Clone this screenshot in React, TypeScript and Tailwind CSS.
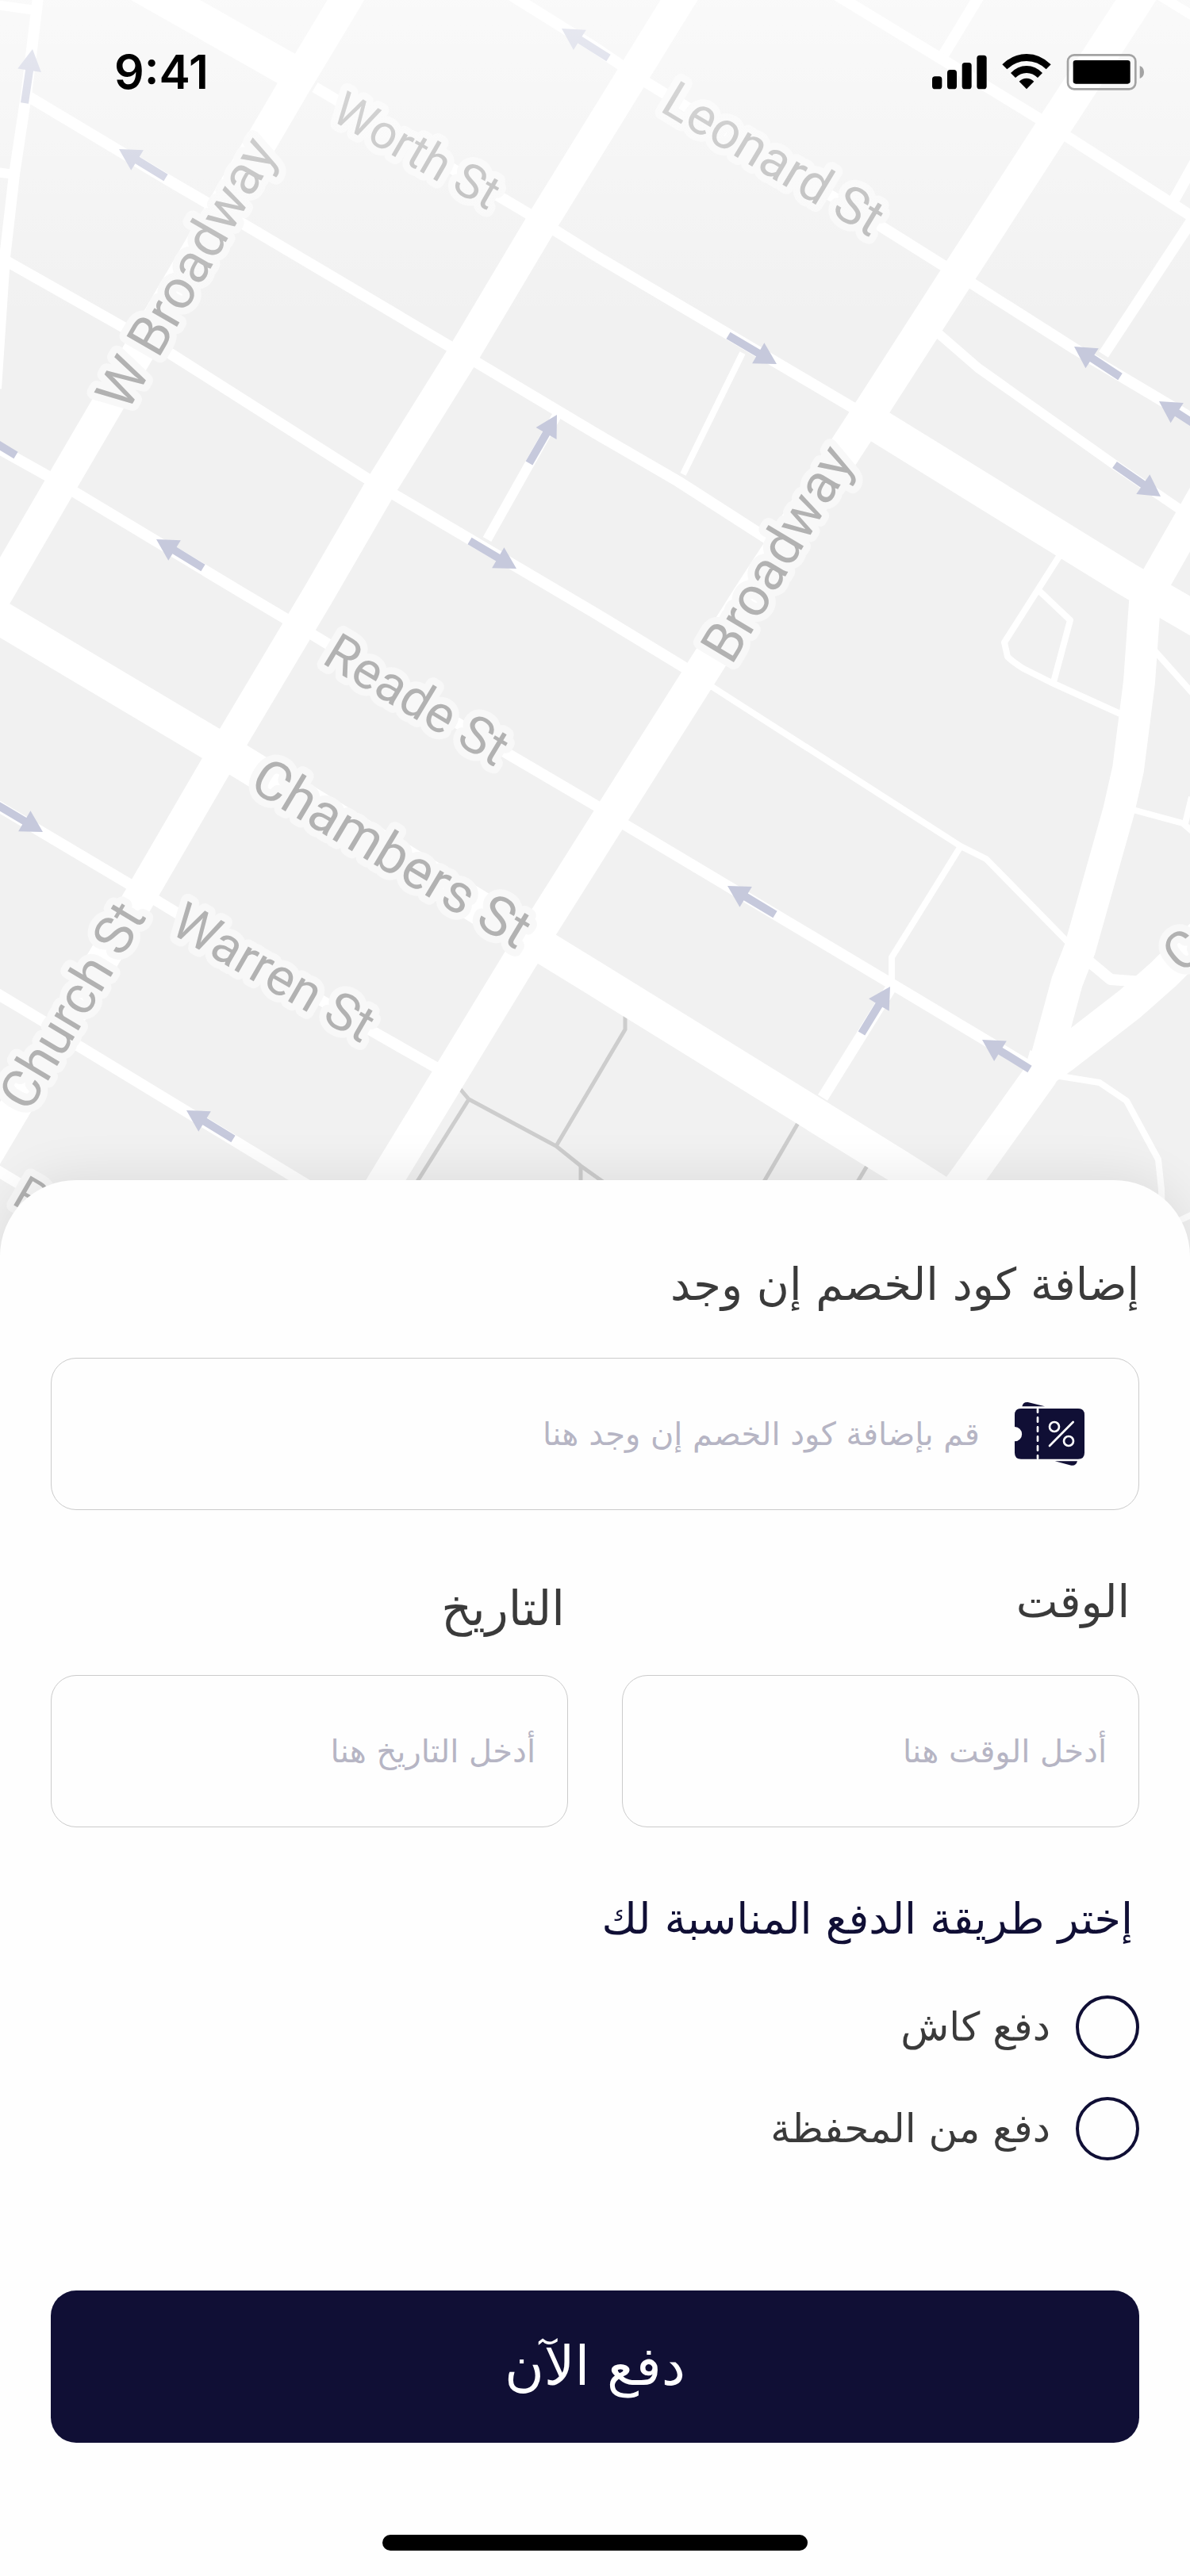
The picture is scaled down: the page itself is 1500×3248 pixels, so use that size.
import { useState } from 'react';

type Point = [number, number];

const ROADS: { width: number; lines: string[] }[] = [
  {
    width: 43,
    lines: [
      'M138 -40L362 87',
      'M-40 755L0 779L282 947L750 1234L1133 1471L1260 1552',
      'M1109 538L1420 730L1520 788',
      'M1466 -55L1432 0L1326 163L1209 344L1092 526L946 750L881 853L771 1027L655 1211L487 1487L440 1565',
      'M1319 1330L1312 1355L1221 1482L1170 1552',
      'M1319 1346L1340 1331L1424 1266L1467 1228L1520 1175',
    ],
  },
  {
    width: 40,
    lines: [
      'M465 -50L436 0L371 108L80 605L-30 794',
      'M885 -45L856 0L682 282L585 445L481 612L401 750L271 968L175 1133L14 1405L-40 1496',
      'M1520 620L1459 727L1443 760L1436 860L1422 970L1410 1023L1361 1197L1345 1238L1319 1334',
    ],
  },
  {
    width: 14,
    lines: [
      'M397 110L667 270L750 322L1080 517',
      'M50 -20L33 120L18 220L6 325L-5 490',
      'M33 120L210 226L306 282L564 435L750 546L855 607L970 681',
      'M6 328L158 414L215 446L462 603L750 773L870 846',
      'M-10 561L60 600L306 748L392 799L641 951L750 1015L788 1040L1123 1240L1300 1346',
      'M-10 1012L160 1113L469 1300L555 1349',
      'M-10 1249L55 1288L96 1317L420 1514',
      'M-10 1472L60 1514',
      'M630 -15L750 60L815 104L1113 287L1223 356L1355 440L1520 538',
      'M1040 -15L1183 72L1312 151L1487 263L1520 284',
      'M1241 -16L1190 68',
      'M1520 180L1480 252',
      'M1510 266L1391 447',
      'M1037 1384L1124 1244',
      'M1370 1210L1400 1235L1440 1238',
    ],
  },
  {
    width: 12,
    lines: [
      'M-5 6L45 13',
      'M-5 217L18 220',
      'M1180 418L1233 464L1405 586L1490 644',
      'M1445 -16L1510 24',
      'M704 520L614 680',
    ],
  },
  {
    width: 8,
    lines: [
      'M936 445L861 598',
      'M890 861L1211 1067L1243 1083L1345 1187',
      'M1211 1067L1124 1207L1124 1240',
      'M1336 700L1266 810L1270 828Q1276 834 1290 843L1324 860L1412 900',
      'M1310 745L1349 782L1328 860',
      'M1455 820L1505 876',
      'M1428 1021L1491 1038L1505 1050M1494 1038L1502 1005',
      'M1330 1356L1386 1365L1420 1388L1460 1462L1464 1500L1466 1570',
      'M1480 1542L1510 1528',
    ],
  },
];

const PATHS = [
  'M580 1373L591 1386L701 1445L732 1470L760 1490',
  'M591 1386L522 1496',
  'M701 1445L788 1298V1281',
  'M732 1470V1496',
  'M1006 1416L960 1495',
  'M1093 1470L1078 1495',
];

const ARROWS: { from: Point; to: Point }[] = [
  { from: [31, 130], to: [41, 62] },
  { from: [209, 224], to: [150, 188] },
  { from: [767, 73], to: [708, 36] },
  { from: [20, 574], to: [-38, 539] },
  { from: [256, 716], to: [197, 680] },
  { from: [667, 584], to: [702, 523] },
  { from: [592, 682], to: [651, 717] },
  { from: [918, 423], to: [979, 459] },
  { from: [1412, 475], to: [1354, 437] },
  { from: [1520, 544], to: [1461, 506] },
  { from: [1405, 586], to: [1463, 626] },
  { from: [-5, 1014], to: [54, 1049] },
  { from: [294, 1436], to: [235, 1400] },
  { from: [977, 1153], to: [917, 1117] },
  { from: [1086, 1303], to: [1122, 1244] },
  { from: [1298, 1348], to: [1238, 1311] },
];

const STREETS: { name: string; at: Point; angle: number; size: number }[] = [
  { name: 'Worth St', at: [415, 150], angle: 30, size: 60 },
  { name: 'Leonard St', at: [830, 139], angle: 31, size: 65 },
  { name: 'W Broadway', at: [160, 521], angle: -60, size: 69 },
  { name: 'Broadway', at: [922, 840], angle: -59, size: 69 },
  { name: 'Reade St', at: [404, 835], angle: 31, size: 65 },
  { name: 'Chambers St', at: [312, 994], angle: 31, size: 69 },
  { name: 'Warren St', at: [212, 1175], angle: 30, size: 65 },
  { name: 'Church St', at: [36, 1404], angle: -59, size: 67 },
  { name: 'C', at: [1489, 1229], angle: -40, size: 65 },
  { name: 'P', at: [13, 1517], angle: 30, size: 60 },
];

function Arrow({ from, to }: { from: Point; to: Point }) {
  const dx = to[0] - from[0];
  const dy = to[1] - from[1];
  const length = Math.hypot(dx, dy);
  const angle = (Math.atan2(dy, dx) * 180) / Math.PI;
  return (
    <path
      transform={`translate(${from[0]} ${from[1]}) rotate(${angle})`}
      d={`M0 -5H${length - 27}V-15L${length} 0L${length - 27} 15V5H0Z`}
    />
  );
}

function StreetMap() {
  return (
    <svg viewBox="0 0 1500 1584" direction="ltr" className="block w-full" role="img" aria-label="خريطة">
      <defs>
        <linearGradient id="fade" x1="0" y1="0" x2="0" y2="1">
          <stop offset="0" stopColor="#fff" stopOpacity="0.62" />
          <stop offset="1" stopColor="#fff" stopOpacity="0" />
        </linearGradient>
      </defs>
      <rect width="1500" height="1584" fill="#f1f1f1" />
      <g fill="none" stroke="#cdcdcd" strokeWidth="5">
        {PATHS.map((d) => (
          <path key={d} d={d} />
        ))}
      </g>
      <g fill="none" stroke="#fff" strokeLinejoin="round">
        {ROADS.map((road) => (
          <path key={road.width} d={road.lines.join('')} strokeWidth={road.width} />
        ))}
      </g>
      <g fill="#c6c9dc">
        {ARROWS.map((arrow) => (
          <Arrow key={arrow.from.join()} {...arrow} />
        ))}
      </g>
      <g
        fill="#b2b2b2"
        stroke="#f8f8f8"
        strokeWidth="18"
        strokeLinejoin="round"
        paintOrder="stroke"
        fontFamily="Roboto, sans-serif"
        direction="ltr"
      >
        {STREETS.map(({ name, at, angle, size }) => (
          <text key={name} fontSize={size} transform={`translate(${at[0]} ${at[1]}) rotate(${angle})`}>
            {name}
          </text>
        ))}
      </g>
      <rect width="1500" height="410" fill="url(#fade)" />
    </svg>
  );
}

function StatusIcons() {
  return (
    <svg viewBox="73 57 801 138" className="h-[46px] w-[267px]" aria-hidden="true">
      <rect x="73" y="142" width="37" height="48" rx="11" />
      <rect x="130" y="117" width="36" height="73" rx="11" />
      <rect x="186" y="90" width="36" height="100" rx="11" />
      <rect x="242" y="62" width="37" height="128" rx="11" />
      <path d="M338 97Q378 57 430 57T522 97L504 115Q472 84 430 84T356 115Z" />
      <path d="M370 129Q396 102 430 102T490 129L472 147Q454 129 430 129T388 147Z" />
      <path d="M402 161Q414 149 430 149T458 161L430 190Z" />
      <rect x="586" y="61" width="256" height="129" rx="24" fill="none" stroke="#a3a3a3" strokeWidth="8" />
      <rect x="606" y="81" width="216" height="89" rx="10" />
      <path d="M858 102Q874 108 874 126T858 150Z" fill="#a3a3a3" />
    </svg>
  );
}

function TicketIcon() {
  return (
    <svg viewBox="120 82 264 244" className="h-[82px] w-[88px] shrink-0" aria-hidden="true">
      <g fill="#100f35">
        <path d="M148 100Q152 82 170 84L234 100Z" />
        <path d="M272 307H357Q352 326 334 323Z" />
        <path d="M144 108H360Q384 108 384 132V275Q384 299 360 299H144Q120 299 120 275V232A27 27 0 0 0 120 177V132Q120 108 144 108Z" />
      </g>
      <g fill="none" stroke="#fff" strokeWidth="8" strokeLinecap="round">
        <path d="M207 110V122M207 142V158M207 178V194M207 214V230M207 250V266M207 286V297" />
        <circle cx="270" cy="177" r="18" />
        <circle cx="324" cy="231" r="18" />
        <path d="M341 159L252 249" />
      </g>
    </svg>
  );
}

const FIELD =
  'h-48 w-full rounded-4xl border border-[#cbcbcb] bg-transparent px-10 text-[40px] leading-[80px] text-[#3a3a3a] outline-none placeholder:overflow-visible placeholder:leading-[80px] placeholder:text-[#b6b5c4] placeholder:opacity-100';

export default function App() {
  const [method, setMethod] = useState('');

  return (
    <main
      dir="rtl"
      className="relative w-full overflow-hidden bg-[#fefefe] font-['DejaVu_Sans',sans-serif]"
    >
      <StreetMap />

      <header
        dir="ltr"
        className="absolute inset-x-0 top-0 flex items-center justify-between pt-[60px] pr-[58px] pl-36"
      >
        <time className="font-[Inter,sans-serif] text-[59px] leading-[62px] font-semibold">9:41</time>
        <StatusIcons />
      </header>

      <form
        className="relative -mt-24 rounded-t-[96px] bg-[#fefefe] px-16 pt-23 pb-8 shadow-[0_-4px_64px_rgba(0,0,0,0.09)]"
        onSubmit={(event) => event.preventDefault()}
      >
        <label htmlFor="coupon" className="block text-[56px] leading-[80px] text-[#3a3a3a]">
          إضافة كود الخصم إن وجد
        </label>
        <div className="mt-13 flex h-48 items-center gap-11 rounded-4xl border border-[#cbcbcb] px-[68px]">
          <TicketIcon />
          <input
            id="coupon"
            type="text"
            placeholder="قم بإضافة كود الخصم إن وجد هنا"
            className="h-full min-w-0 flex-1 bg-transparent text-[40px] leading-[80px] text-[#3a3a3a] outline-none placeholder:overflow-visible placeholder:leading-[80px] placeholder:text-[#b6b5c4] placeholder:opacity-100"
          />
        </div>

        <div className="mt-19 grid grid-cols-2 gap-17">
          <div>
            <label htmlFor="time" className="mb-13 block pr-3 text-[56px] leading-[80px] text-[#3a3a3a]">
              الوقت
            </label>
            <input id="time" type="text" placeholder="أدخل الوقت هنا" className={FIELD} />
          </div>
          <div>
            <label htmlFor="date" className="mb-9 block pr-1 text-[60px] leading-[96px] text-[#3a3a3a]">
              التاريخ
            </label>
            <input id="date" type="text" placeholder="أدخل التاريخ هنا" className={FIELD} />
          </div>
        </div>

        <fieldset className="mt-19">
          <legend className="pr-2 text-[54px] leading-[80px] text-[#100f35]">
            إختر طريقة الدفع المناسبة لك
          </legend>
          <div className="mt-14 flex flex-col gap-12">
            {[
              ['cash', 'دفع كاش'],
              ['wallet', 'دفع من المحفظة'],
            ].map(([value, label]) => (
              <label key={value} className="flex items-center gap-8 text-[50px] leading-[80px] text-[#3a3a3a]">
                <input
                  type="radio"
                  name="method"
                  value={value}
                  checked={method === value}
                  onChange={() => setMethod(value)}
                  className="size-20 shrink-0 appearance-none rounded-full border-4 border-[#100f35] checked:border-[24px]"
                />
                {label}
              </label>
            ))}
          </div>
        </fieldset>

        <button
          type="submit"
          className="mt-41 block h-48 w-full rounded-4xl bg-[#100f35] text-[68px] leading-[96px] text-white"
        >
          دفع الآن
        </button>

        <div className="mx-auto mt-29 h-5 w-[536px] max-w-full rounded-full bg-black" />
      </form>
    </main>
  );
}
